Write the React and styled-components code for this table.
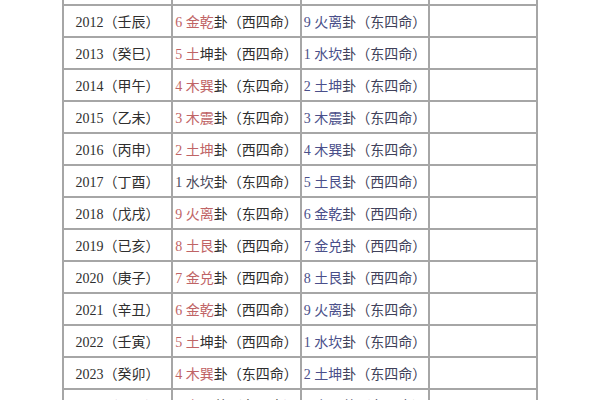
import React from "react";
import styled, { createGlobalStyle } from "styled-components";

const Global = createGlobalStyle`
  html, body { margin: 0; padding: 0; background: #fff; }
  body { width: 600px; height: 400px; overflow: hidden; }
`;

const Page = styled.div`
  width: 600px;
  height: 400px;
  overflow: hidden;
  background: #fff;
`;

const Table = styled.table`
  border-collapse: collapse;
  margin: -28px 0 0 62px;
  table-layout: fixed;
  font-family: "Liberation Serif", "Noto Sans CJK SC", serif;
  font-size: 14px;
  color: #2e2e2e;
`;

const Row = styled.tr`
  height: 32px;
`;

const Cell = styled.td`
  border: 2px solid #a6a6a6;
  padding: 0;
  text-align: center;
  vertical-align: middle;
  white-space: nowrap;
  width: ${(p) => p.$w}px;
`;

const Mark = styled.span`
  color: ${(p) => p.$c};
`;

const rows = [
  ["2011（辛卯）", ["7 金兑", "卦（西四命）"], ["8 土艮", "卦（西四命）"]],
  ["2012（壬辰）", ["6 金乾", "卦（西四命）"], ["9 火离", "卦（东四命）"]],
  ["2013（癸巳）", ["5 土", "坤卦（西四命）"], ["1 水坎", "卦（东四命）"]],
  ["2014（甲午）", ["4 木巽", "卦（东四命）"], ["2 土坤", "卦（东四命）"]],
  ["2015（乙未）", ["3 木震", "卦（东四命）"], ["3 木震", "卦（东四命）"]],
  ["2016（丙申）", ["2 土坤", "卦（西四命）"], ["4 木巽", "卦（东四命）"]],
  ["2017（丁酉）", ["1 水坎", "卦（东四命）"], ["5 土艮", "卦（西四命）"]],
  ["2018（戊戌）", ["9 火离", "卦（东四命）"], ["6 金乾", "卦（西四命）"]],
  ["2019（已亥）", ["8 土艮", "卦（西四命）"], ["7 金兑", "卦（西四命）"]],
  ["2020（庚子）", ["7 金兑", "卦（西四命）"], ["8 土艮", "卦（西四命）"]],
  ["2021（辛丑）", ["6 金乾", "卦（西四命）"], ["9 火离", "卦（东四命）"]],
  ["2022（壬寅）", ["5 土", "坤卦（西四命）"], ["1 水坎", "卦（东四命）"]],
  ["2023（癸卯）", ["4 木巽", "卦（东四命）"], ["2 土坤", "卦（东四命）"]],
  ["2024（甲辰）", ["3 木震", "卦（东四命）"], ["3 木震", "卦（东四命）"]],
];

const RED = "#bf6466";
const BLUE = "#4a4f8a";

export default function App() {
  return (
    <Page>
      <Global />
      <Table>
        <tbody>
          {rows.map(([year, male, female]) => (
            <Row key={year}>
              <Cell $w={107}>{year}</Cell>
              <Cell $w={127}>
                <Mark $c={male[0].startsWith("1 水") ? "#4a4a5a" : RED}>{male[0]}</Mark>
                {male[1]}
              </Cell>
              <Cell $w={126}>
                <Mark $c={BLUE}>{female[0]}</Mark>
                <Mark $c="#40415a">{female[1]}</Mark>
              </Cell>
              <Cell $w={106} />
            </Row>
          ))}
        </tbody>
      </Table>
    </Page>
  );
}
